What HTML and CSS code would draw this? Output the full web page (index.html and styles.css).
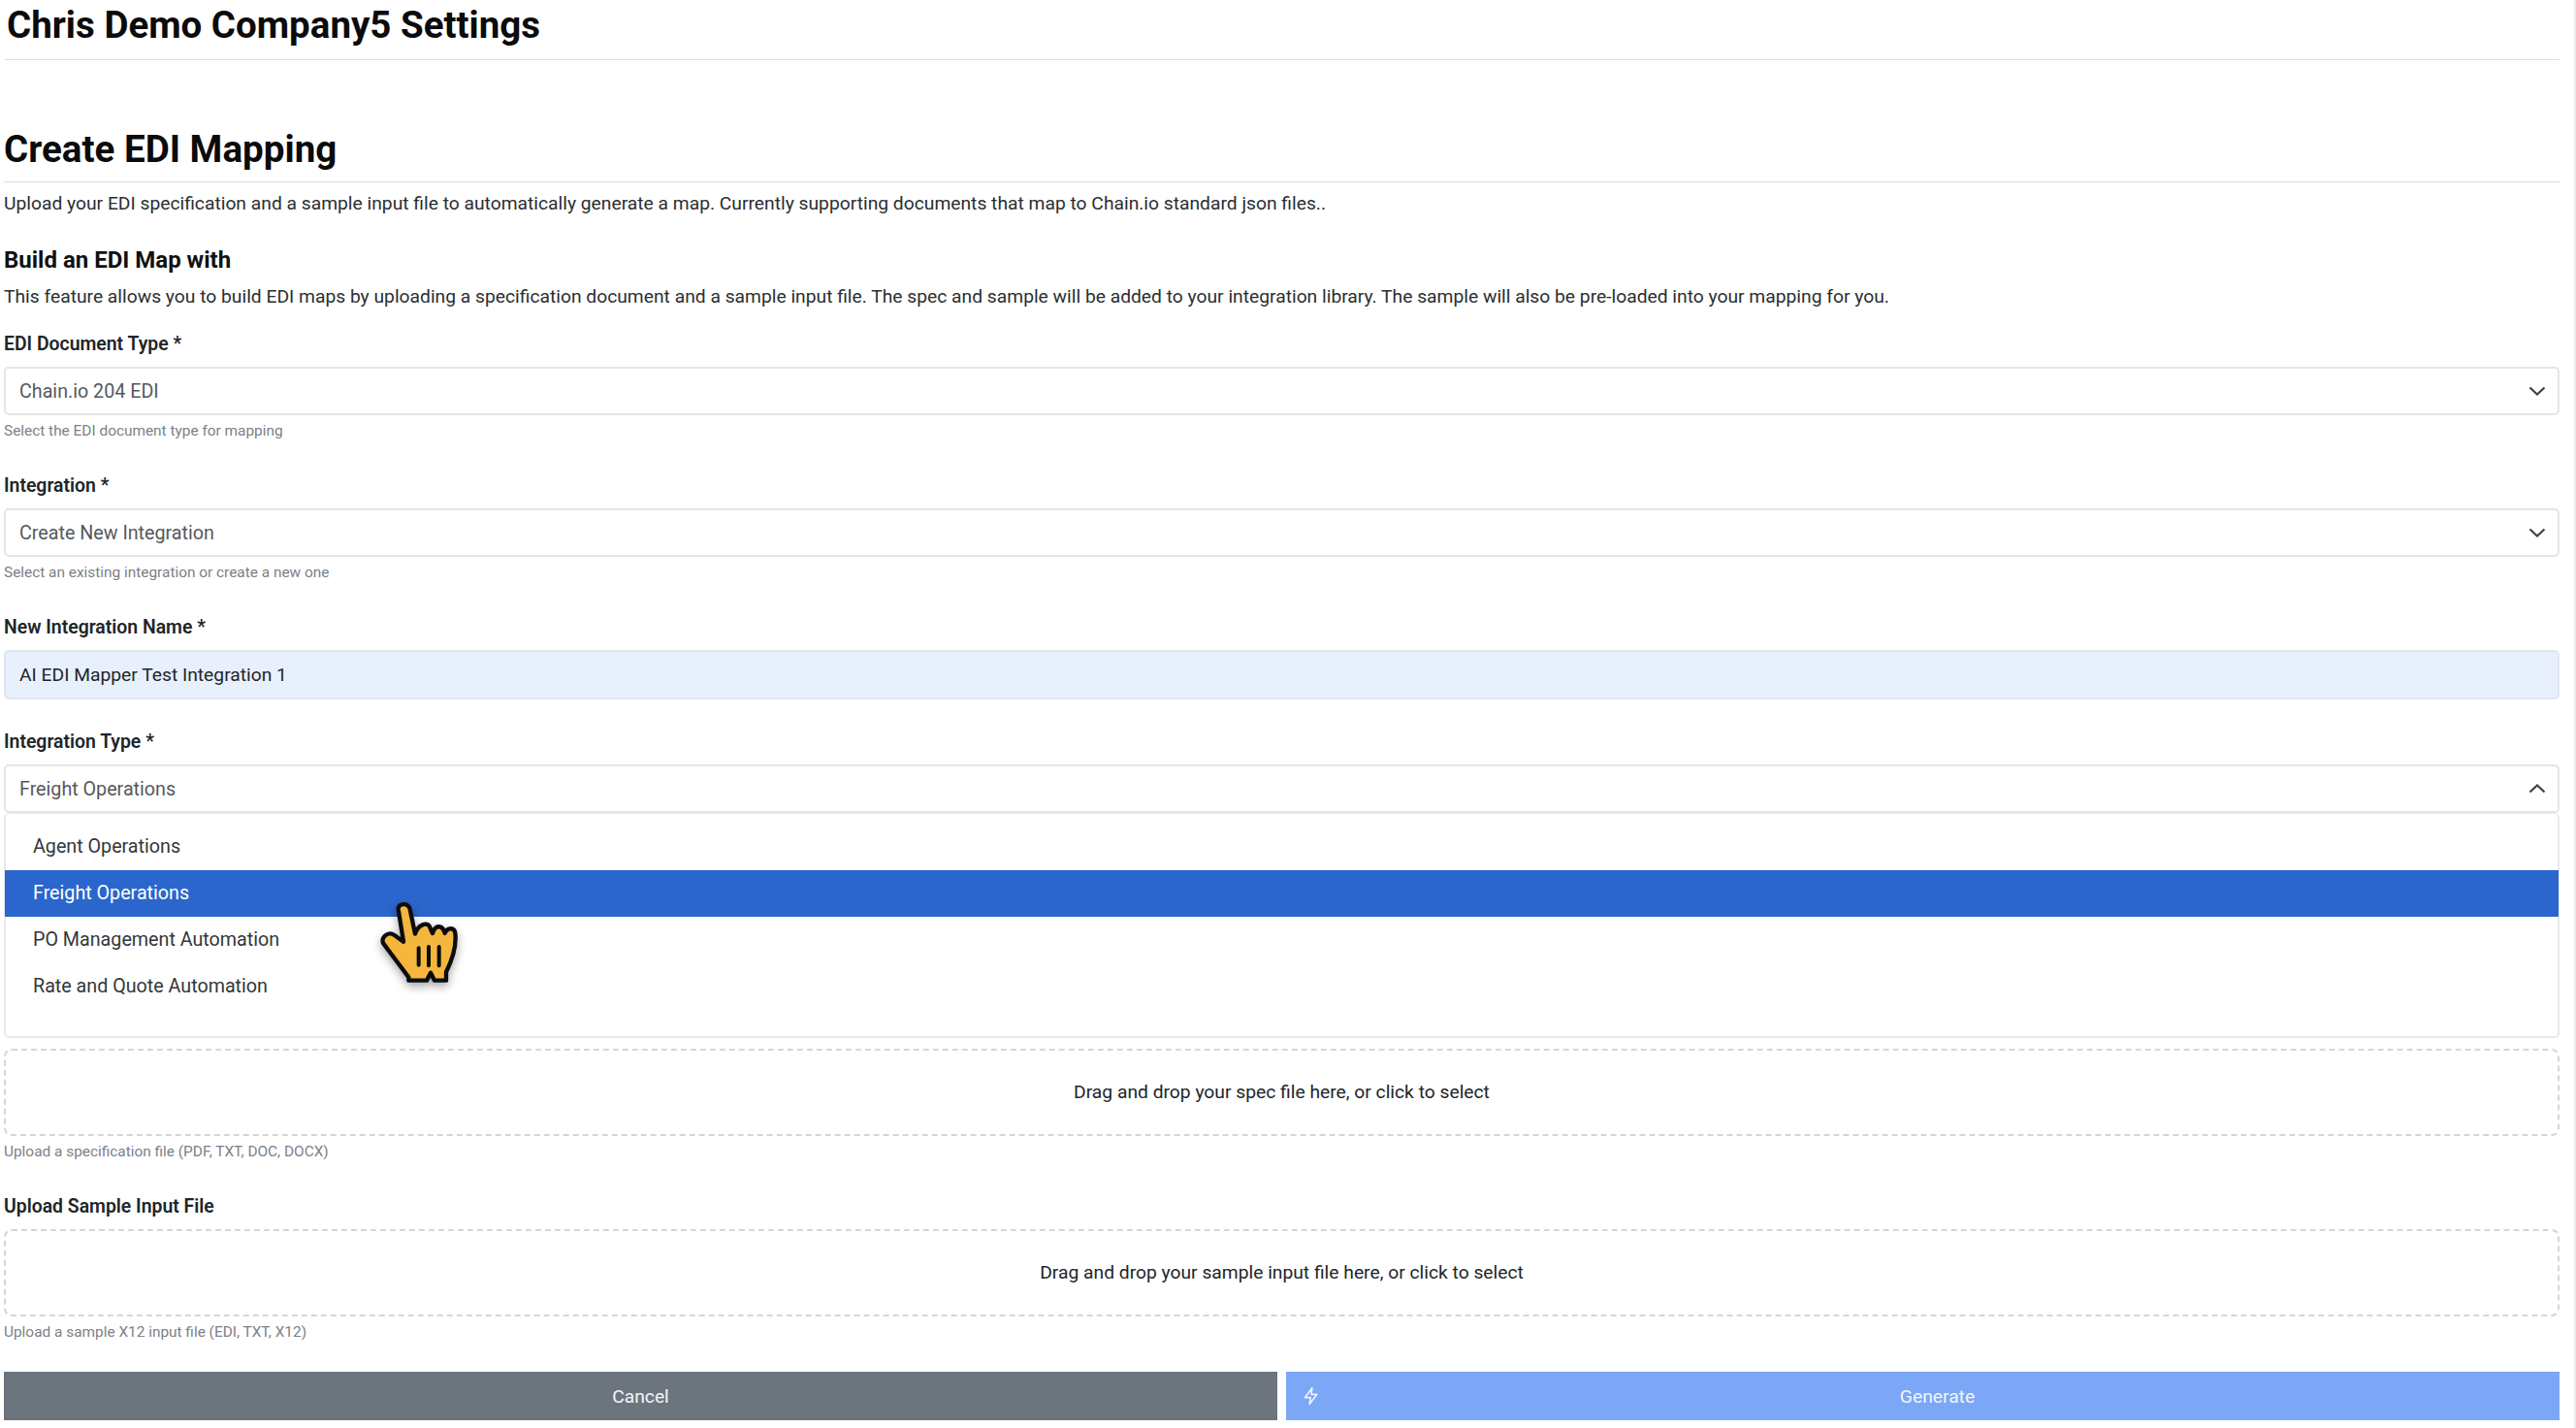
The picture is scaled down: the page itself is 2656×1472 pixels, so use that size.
FILE: index.html
```html
<!DOCTYPE html>
<html lang="en">
<head>
<meta charset="utf-8">
<title>Create EDI Mapping</title>
<link rel="stylesheet" href="styles.css">
</head>
<body>
<div class="page">
  <header class="top"><h1>Chris Demo Company5 Settings</h1></header>
  <h2>Create EDI Mapping</h2>
  <p class="lead">Upload your EDI specification and a sample input file to automatically generate a map. Currently supporting documents that map to Chain.io standard json files..</p>
  <h3>Build an EDI Map with</h3>
  <p class="intro">This feature allows you to build EDI maps by uploading a specification document and a sample input file. The spec and sample will be added to your integration library. The sample will also be pre-loaded into your mapping for you.</p>

  <div class="field">
    <div class="label">EDI Document Type *</div>
    <div class="select"><span>Chain.io 204 EDI</span>
      <svg class="chev" viewBox="0 0 18 10"><path d="M1.5 1.5 9 8.5l7.5-7"/></svg></div>
    <div class="help">Select the EDI document type for mapping</div>
  </div>

  <div class="field">
    <div class="label">Integration *</div>
    <div class="select"><span>Create New Integration</span>
      <svg class="chev" viewBox="0 0 18 10"><path d="M1.5 1.5 9 8.5l7.5-7"/></svg></div>
    <div class="help">Select an existing integration or create a new one</div>
  </div>

  <div class="field short">
    <div class="label">New Integration Name *</div>
    <div class="select filled"><span>AI EDI Mapper Test Integration 1</span></div>
  </div>

  <div class="field tight">
    <div class="label">Integration Type *</div>
    <div class="select"><span>Freight Operations</span>
      <svg class="chev" viewBox="0 0 18 10"><path d="M1.5 8.5 9 1.5l7.5 7"/></svg></div>
    <ul class="menu">
      <li>Agent Operations</li>
      <li class="active">Freight Operations</li>
      <li>PO Management Automation</li>
      <li>Rate and Quote Automation</li>
    </ul>
    <svg class="hand" viewBox="0 0 450 390">
      <path class="hand-body" d="M152 112C150 94 182 88 188 112L204 188C212 160 240 150 248 164L258 186C266 160 288 158 296 186C304 166 328 168 328 186C332 220 322 262 300 306V332H264L252 308 240 332H184V322C160 290 130 250 106 218 96 200 120 178 140 192L168 212Z"/>
      <path class="hand-line" d="M215 232V284M246 228V286M278 228V286"/>
    </svg>
  </div>

  <div class="field">
    <div class="drop">Drag and drop your spec file here, or click to select</div>
    <div class="help">Upload a specification file (PDF, TXT, DOC, DOCX)</div>
  </div>

  <div class="field short">
    <div class="label">Upload Sample Input File</div>
    <div class="drop">Drag and drop your sample input file here, or click to select</div>
    <div class="help">Upload a sample X12 input file (EDI, TXT, X12)</div>
  </div>

  <div class="actions">
    <button class="btn cancel" type="button"><span class="btn-text">Cancel</span></button>
    <button class="btn generate" type="button">
      <svg class="bolt" viewBox="0 0 24 24"><path d="M13 2 4 14h7l-1 8 9-12h-7z"/></svg>
      <span class="btn-text">Generate</span>
    </button>
  </div>
</div>
</body>
</html>
```

FILE: styles.css
```css
* { box-sizing: border-box; }
html, body { margin: 0; height: 100%; }
body {
  background: #fff;
  color: #2a2e32;
  font-family: Roboto, "Liberation Sans", sans-serif;
  font-size: 19.25px;
  overflow: hidden;
  border-right: 2px solid #ebebeb;
}
.page { padding: 0 15px 0 4px; }
.top { height: 62px; border-bottom: 1px solid #dcdcdc; margin-left: 1px; }
h1 { margin: 0; padding-left: 2px; font-size: 38.5px; line-height: 52px; font-weight: 700; color: #0b0b0b; }
h2 {
  margin: 68px 0 0; height: 58px; border-bottom: 1px solid #dcdcdc; padding-top: 1px;
  font-size: 38.6px; line-height: 46px; font-weight: 700; color: #0b0b0b;
}
.lead { margin: 10px 0 0; line-height: 24px; }
h3 { margin: 32px 0 0; font-size: 24px; line-height: 29px; font-weight: 700; color: #111; }
.intro { margin: 11px 0 0; line-height: 24px; }
.field { position: relative; margin-top: 24px; margin-bottom: 34px; }
.field.short { margin-top: 0; margin-bottom: 31px; }
.field.tight { margin-top: 0; margin-bottom: 11px; }
.field + .field { margin-top: 0; }
.label { font-size: 19.4px; font-weight: 600; line-height: 25px; margin-bottom: 11px; color: #212529; }
.select {
  position: relative; display: flex; align-items: center;
  height: 50px; padding: 0 14px; font-size: 19.7px;
  border: 2px solid #e3e5e8; border-radius: 5px; background: #fff; color: #55595e;
}
.select.filled { height: 51px; font-size: 19.25px; background: #e8f0fe; color: #212529; border-color: #e0e5ee; }
.chev { position: absolute; right: 12px; top: 50%; width: 18px; height: 10px; margin-top: -5px; fill: none; stroke: #3d4147; stroke-width: 2.2; }
.help { margin-top: 6px; font-size: 15.4px; line-height: 20px; color: #7c8187; }
.menu {
  list-style: none; margin: 0; padding: 10px 0 30px; font-size: 19.7px; color: #33373b;
  height: 232px; border: 2px solid #e8e9eb; border-top-width: 1px; border-radius: 5px; background: #fff;
}
.menu li { height: 48px; line-height: 48px; padding-left: 29px; margin: 0 -1px; }
.menu li.active { background: #2b66cc; color: #fff; }
.hand { position: absolute; left: 356px; top: 148px; width: 150px; height: 130px; filter: drop-shadow(0 4px 5px rgba(0,0,0,.35)); }
.hand-body { fill: #f4b63c; stroke: #0c0c0c; stroke-width: 13; stroke-linejoin: round; }
.hand-line { fill: none; stroke: #0c0c0c; stroke-width: 12; stroke-linecap: round; }
.drop {
  display: flex; align-items: center; justify-content: center;
  height: 90px; padding-bottom: 2px; border: 2px dashed #d3d6d9; border-radius: 8px; color: #212529;
}
.actions { display: grid; grid-template-columns: 1fr 1fr; gap: 9px; }
.btn {
  display: flex; align-items: center; height: 50px; padding: 0; border: 0; color: #f4f6f9;
  font-family: inherit; font-size: 19.25px;
}
.btn-text { flex: 1; text-align: center; }
.cancel { background: #6c757d; }
.generate { background: #7ba7f6; padding: 0 6px 0 16px; }
.bolt { width: 20px; height: 20px; fill: none; stroke: #eef3fd; stroke-width: 2; stroke-linejoin: round; }
```
